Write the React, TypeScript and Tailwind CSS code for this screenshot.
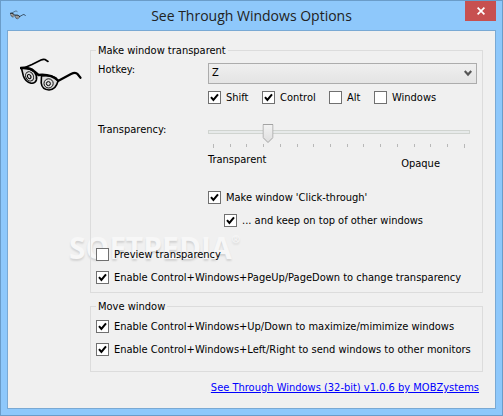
import React, { useState } from 'react';

interface CheckProps {
  label: string;
  defaultChecked?: boolean;
  className?: string;
}

function Check({ label, defaultChecked = false, className = '' }: CheckProps) {
  return (
    <label className={`flex h-[13px] items-center gap-[5px] whitespace-nowrap leading-[13px] ${className}`}>
      <span className="relative block h-[13px] w-[13px] shrink-0">
        <input
          type="checkbox"
          defaultChecked={defaultChecked}
          className="peer block h-[13px] w-[13px] appearance-none border border-[#707070] bg-white"
        />
        <svg
          viewBox="0 0 13 13"
          className="pointer-events-none absolute inset-0 hidden h-[13px] w-[13px] peer-checked:block"
        >
          <path d="M3 6.2 L5.4 9 L10 3.4" fill="none" stroke="#000" strokeWidth="2" />
        </svg>
      </span>
      <span>{label}</span>
    </label>
  );
}

function Glasses({ className = '' }: { className?: string }) {
  return (
    <svg viewBox="0 0 63 34" className={className} fill="none" stroke="#000" aria-hidden="true">
      <path d="M5 9.5 L12 6.5 L21 2 Q23.5 0.8 25 1.6 L28 3.4" strokeWidth="1.7" strokeLinecap="round" />
      <path
        d="M1.5 10.5 Q10 10 14.5 14 Q17.4 18 16.4 22 Q15 25.8 11 25.2 Q5.4 24 3.4 18 Z"
        fill="#dcdcdc"
        strokeWidth="1.6"
      />
      <path
        d="M21.5 18 Q30 16.8 36 20 L38 23 Q36 31.6 29 32 Q22 31.6 21.2 25 Z"
        fill="#dcdcdc"
        strokeWidth="1.6"
      />
      <path d="M0.8 10 Q9.5 9 14 13.2 L18.5 17 Q31 15.8 38 22.5" strokeWidth="2.4" strokeLinecap="round" />
      <ellipse cx="9.6" cy="18.4" rx="3.8" ry="4.8" transform="rotate(-28 9.6 18.4)" strokeWidth="0.9" />
      <ellipse cx="9.2" cy="18.6" rx="1.6" ry="2.2" transform="rotate(-28 9.2 18.6)" strokeWidth="1" />
      <circle cx="28.6" cy="25.4" r="4.6" strokeWidth="0.9" />
      <circle cx="28.4" cy="25.6" r="2" strokeWidth="1" />
      <path d="M38 23 L51 16 Q55.5 13.6 57.5 16 L60.5 19.8" strokeWidth="2.2" strokeLinecap="round" />
    </svg>
  );
}

const TICKS = Array.from({ length: 16 }, (_, i) => i);

function TransparencySlider() {
  const [value, setValue] = useState(22);

  return (
    <div className="mr-[7px]">
      <div className="relative flex h-5 items-center">
        <div className="mb-1 h-1 w-full border border-[#d0d4d0] bg-[#e7eaea]" />
        <div className="pointer-events-none absolute inset-x-[5px] top-0 h-5">
          <svg
            viewBox="0 0 11 20"
            className="absolute top-0 h-5 w-[11px] -translate-x-1/2"
            style={{ left: `${value}%` }}
          >
            <defs>
              <linearGradient id="thumb" x1="0" y1="0" x2="0" y2="1">
                <stop offset="0" stopColor="#f3f3f3" />
                <stop offset="1" stopColor="#dedede" />
              </linearGradient>
            </defs>
            <path d="M0.5 0.5 H10.5 V13.5 L5.5 18.5 L0.5 13.5 Z" fill="url(#thumb)" stroke="#a3a3a3" />
          </svg>
        </div>
        <input
          id="transparency"
          type="range"
          min={0}
          max={100}
          value={value}
          onChange={e => setValue(Number(e.target.value))}
          className="absolute inset-0 h-5 w-full opacity-0"
        />
      </div>
      <div className="flex justify-between px-[5px]">
        {TICKS.map(i => (
          <span key={i} className={`w-px bg-[#b8b8b8] ${i === 0 || i === 15 ? 'h-1' : 'h-[3px]'}`} />
        ))}
      </div>
      <div className="mt-[5px] flex items-start justify-between leading-[14px]">
        <span>Transparent</span>
        <span className="mt-1 mr-[30px]">Opaque</span>
      </div>
    </div>
  );
}

export default function App() {
  return (
    <div className="flex min-h-screen w-full flex-col border border-[#6a9cc9] bg-[#8ec8fb] px-1.5 pb-1.5 font-['DejaVu_Sans_Condensed','DejaVu_Sans',sans-serif] text-[11px] text-black">
      <header className="relative flex h-[29px] items-center justify-center">
        <Glasses className="absolute left-[3px] top-[9px] h-[10px] w-4" />
        <h1 className="font-['Open_Sans',sans-serif] text-[14px] leading-5 text-[#222]">
          See Through Windows Options
        </h1>
        <button
          type="button"
          aria-label="Close"
          className="absolute right-0 top-0 flex h-5 w-[31px] items-center justify-center bg-[#c75050]"
        >
          <svg viewBox="0 0 8 8" className="h-2 w-2" stroke="#fff" strokeWidth="1.7">
            <path d="M0.6 0.6 L7.4 7.4 M7.4 0.6 L0.6 7.4" />
          </svg>
        </button>
      </header>

      <main className="relative flex flex-1 items-start border border-[#79a9d4] bg-[#f0f0f0] px-3 pt-[11px]">
        {/* watermark, under the form's texts */}
        <div className="pointer-events-none absolute left-[61px] top-[199px] flex font-['Open_Sans',sans-serif] text-[30px] font-bold leading-[36px] text-[#f7f7f7] [text-shadow:0_2px_2px_rgba(0,0,0,0.12)]">
          SOFTPEDIA
          <span className="text-[10px] leading-[18px]">®</span>
        </div>

        <Glasses className="mt-4 h-[34px] w-[63px] shrink-0" />

        <div className="relative ml-[7px] min-w-0 flex-1">
          <fieldset className="min-w-0 border border-[#dcdcdc] pb-2">
            <legend className="ml-[5px] px-0.5 leading-[17px]">Make window transparent</legend>

            <div className="grid grid-cols-[110px_1fr] pl-[7px] pr-[5px] pt-1">
              <label htmlFor="hotkey" className="leading-[14px]">
                Hotkey:
              </label>
              <div>
                <div className="relative">
                  <select
                    id="hotkey"
                    defaultValue="Z"
                    className="block h-[21px] w-full appearance-none border border-[#acacac] bg-linear-to-b from-[#efefef] to-[#e4e4e4] px-[3px]"
                  >
                    <option>X</option>
                    <option>Y</option>
                    <option>Z</option>
                  </select>
                  <svg
                    viewBox="0 0 8 7"
                    className="pointer-events-none absolute right-[5px] top-[7px] h-[7px] w-2"
                    fill="none"
                    stroke="#555"
                    strokeWidth="2.2"
                  >
                    <path d="M0.7 1 L4 4.6 L7.3 1" />
                  </svg>
                </div>
                <div className="mt-[7px] flex">
                  <Check label="Shift" defaultChecked className="w-[54px]" />
                  <Check label="Control" defaultChecked className="w-[67px]" />
                  <Check label="Alt" className="w-[45px]" />
                  <Check label="Windows" />
                </div>
              </div>

              <label htmlFor="transparency" className="mt-[19px] leading-[14px]">
                Transparency:
              </label>
              <div className="mt-5">
                <TransparencySlider />
                <Check label="Make window 'Click-through'" defaultChecked className="mt-5" />
                <Check label="... and keep on top of other windows" defaultChecked className="ml-4 mt-2.5" />
              </div>
            </div>

            <div className="mt-[21px] flex flex-col gap-2.5 pl-[5px]">
              <Check label="Preview transparency" />
              <Check label="Enable Control+Windows+PageUp/PageDown to change transparency" defaultChecked />
            </div>
          </fieldset>

          <fieldset className="mt-[5px] min-w-0 border border-[#dcdcdc] pb-[15px]">
            <legend className="ml-[5px] px-0.5 leading-[17px]">Move window</legend>
            <div className="flex flex-col gap-2.5 pl-[5px] pt-[5px]">
              <Check label="Enable Control+Windows+Up/Down to maximize/mimimize windows" defaultChecked />
              <Check label="Enable Control+Windows+Left/Right to send windows to other monitors" defaultChecked />
            </div>
          </fieldset>

          <div className="mr-1 mt-[9px] text-right leading-[14px]">
            <a href="#about" className="text-[#0000ff] underline">
              See Through Windows (32-bit) v1.0.6 by MOBZystems
            </a>
          </div>
        </div>
      </main>
    </div>
  );
}
